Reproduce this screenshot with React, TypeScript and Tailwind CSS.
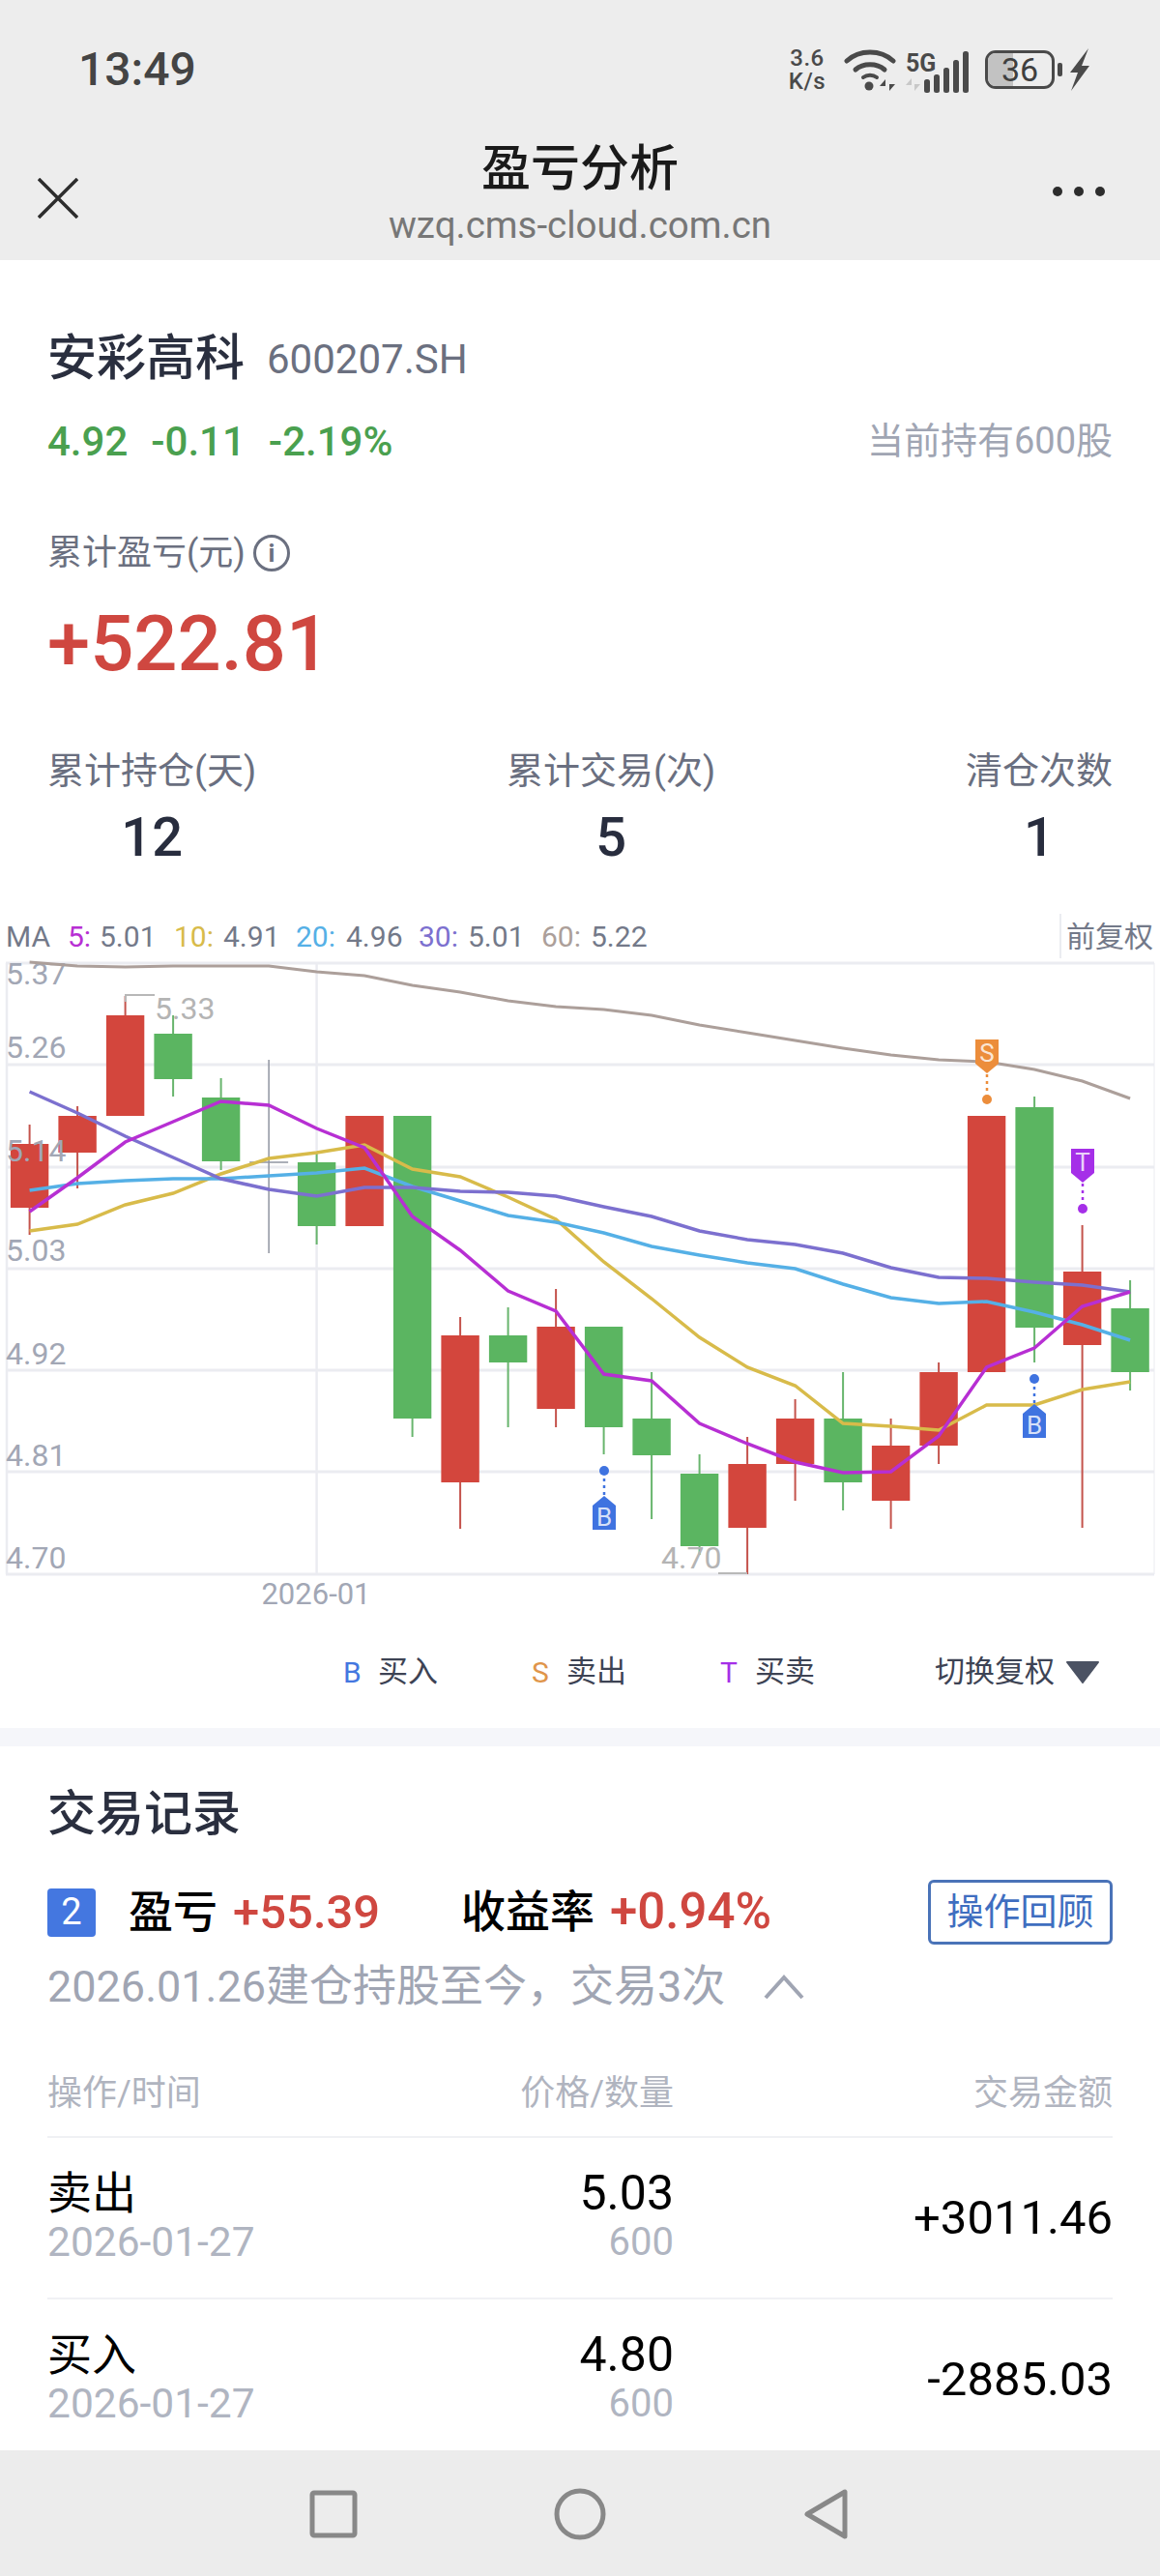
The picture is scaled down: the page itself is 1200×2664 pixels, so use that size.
import React from "react";

const X0 = 30.6;
const STEP = 49.5;
const cx = (i: number) => X0 + STEP * i;

// [up, high, bodyTop, bodyBottom, low]
const candles: [number, number, number, number, number][] = [
  [1, 1163, 1183, 1249, 1277],
  [1, 1144, 1154, 1192, 1229],
  [1, 1030, 1050, 1154, 1154],
  [0, 1050, 1069, 1116, 1134],
  [0, 1115, 1135, 1201, 1210],
  [2, 1096, 1202, 1202, 1296],
  [0, 1192, 1202, 1268, 1287],
  [1, 1154, 1154, 1268, 1268],
  [0, 1154, 1154, 1467, 1486],
  [1, 1362, 1381, 1533, 1581],
  [0, 1352, 1381, 1409, 1476],
  [1, 1333, 1372, 1457, 1476],
  [0, 1372, 1372, 1476, 1504],
  [0, 1419, 1467, 1505, 1571],
  [0, 1504, 1524, 1599, 1608],
  [1, 1486, 1514, 1580, 1628],
  [1, 1447, 1467, 1514, 1552],
  [0, 1419, 1467, 1533, 1562],
  [1, 1467, 1495, 1552, 1581],
  [1, 1409, 1419, 1495, 1514],
  [1, 1154, 1154, 1419, 1419],
  [0, 1134, 1145, 1373, 1409],
  [1, 1267, 1315, 1391, 1580],
  [0, 1324, 1353, 1419, 1438],
];

const ma60 = [995, 999, 1000, 999, 999, 999, 1005, 1009, 1019, 1026, 1035, 1041, 1044, 1050, 1060, 1068, 1076, 1084, 1091, 1096, 1098, 1106, 1118, 1136];
const ma30 = [1129, 1151, 1175, 1197, 1219, 1230, 1237, 1228, 1228, 1232, 1233, 1237, 1248, 1258, 1273, 1282, 1287, 1296, 1311, 1321, 1322, 1326, 1329, 1336];
const ma20 = [1231, 1224, 1221, 1219, 1219, 1216, 1213, 1208, 1227, 1242, 1257, 1264, 1275, 1289, 1298, 1306, 1312, 1328, 1342, 1348, 1346, 1357, 1370, 1386];
const ma10 = [1273, 1266, 1246, 1234, 1214, 1198, 1192, 1184, 1209, 1217, 1238, 1261, 1305, 1343, 1383, 1414, 1433, 1472, 1475, 1479, 1453, 1453, 1437, 1429];
const ma5 = [1253, 1218, 1181, 1160, 1139, 1143, 1167, 1187, 1258, 1293, 1335, 1356, 1421, 1428, 1472, 1493, 1512, 1523, 1522, 1485, 1414, 1394, 1351, 1336];

const toPoints = (ys: number[]) => ys.map((y, i) => `${cx(i)},${y}`).join(" ");

const gridYs = [996, 1101, 1207, 1312, 1417, 1522, 1628];

const axisLabels: [string, number][] = [
  ["5.37", 1018],
  ["5.26", 1094],
  ["5.14", 1201],
  ["5.03", 1304],
  ["4.92", 1411],
  ["4.81", 1516],
  ["4.70", 1622],
];

function Marker({ x, y, color, label, down }: { x: number; y: number; color: string; label: string; down: boolean }) {
  // y is where the flag's tip meets the dotted line
  if (down) {
    return (
      <g>
        <path d={`M${x - 12} ${y - 35}h24v25l-12 10l-12 -10z`} fill={color} />
        <text x={x} y={y - 12} fontSize="26" fill="#fff" fillOpacity="0.8" textAnchor="middle" fontFamily="Roboto">{label}</text>
        <line x1={x} y1={y + 1} x2={x} y2={y + 20} stroke={color} strokeWidth="2.5" strokeDasharray="3 4" />
        <circle cx={x} cy={y + 27} r="5" fill={color} />
      </g>
    );
  }
  return (
    <g>
      <path d={`M${x - 12} ${y + 35}h24v-25l-12 -10l-12 10z`} fill={color} />
      <text x={x} y={y + 31} fontSize="26" fill="#fff" fillOpacity="0.8" textAnchor="middle" fontFamily="Roboto">{label}</text>
      <line x1={x} y1={y - 1} x2={x} y2={y - 18} stroke={color} strokeWidth="2.5" strokeDasharray="3 4" />
      <circle cx={x} cy={y - 26} r="5" fill={color} />
    </g>
  );
}

function KChart() {
  return (
    <svg width="1200" height="684" viewBox="0 986 1200 684" className="block">
      {gridYs.map((y) => (
        <line key={y} x1="6" x2="1194" y1={y} y2={y} stroke="#ebecf1" strokeWidth="3" />
      ))}
      <line x1="7" x2="7" y1="996" y2="1628" stroke="#ebecf1" strokeWidth="2.5" />
      <line x1="327.6" x2="327.6" y1="996" y2="1628" stroke="#ebecf1" strokeWidth="2.5" />
      <line x1="1194" x2="1194" y1="996" y2="1628" stroke="#ebecf1" strokeWidth="1" />

      {candles.map(([up, high, top, bottom, low], i) => {
        const x = cx(i);
        if (up === 2) {
          return (
            <g key={i} stroke="#8f94a0" strokeWidth="1.5">
              <line x1={x} x2={x} y1={high} y2={low} />
              <line x1={x - 20} x2={x + 20} y1={top} y2={top} />
            </g>
          );
        }
        const fill = up ? "#d3463d" : "#5bb561";
        const wick = up ? "#c4534c" : "#68b56d";
        return (
          <g key={i}>
            <line x1={x} x2={x} y1={high} y2={low} stroke={wick} strokeWidth="2" />
            <rect x={x - 19.7} y={top} width="39.4" height={bottom - top} fill={fill} />
          </g>
        );
      })}

      {axisLabels.map(([t, y]) => (
        <text key={t} x="6" y={y} fontSize="32" fill="#a2a7b5" fontFamily="Roboto">{t}</text>
      ))}

      <polyline points={toPoints(ma60)} fill="none" stroke="#ac9f9a" strokeWidth="3" />
      <polyline points={toPoints(ma10)} fill="none" stroke="#d8bb4a" strokeWidth="3.5" />
      <polyline points={toPoints(ma20)} fill="none" stroke="#55b0e6" strokeWidth="3.5" />
      <polyline points={toPoints(ma30)} fill="none" stroke="#7c70cf" strokeWidth="3.5" />
      <polyline points={toPoints(ma5)} fill="none" stroke="#b72fd3" strokeWidth="3.5" />

      <polyline points="130,1036 130,1029 160,1029" fill="none" stroke="#b8b8b8" strokeWidth="2" />
      <text x="160" y="1054" fontSize="32" fill="#b4b4b4" fontFamily="Roboto">5.33</text>
      <line x1="743" x2="773" y1="1627" y2="1627" stroke="#b8b8b8" strokeWidth="2" />
      <text x="684" y="1622" fontSize="32" fill="#b4b4b4" fontFamily="Roboto">4.70</text>
      <text x="327" y="1659" fontSize="31" fill="#a2a7b5" textAnchor="middle" fontFamily="Roboto">2026-01</text>

      <Marker x={1021} y={1110} color="#ec8d3b" label="S" down />
      <Marker x={1120} y={1223} color="#a52fe8" label="T" down />
      <Marker x={625} y={1547} color="#3f73e0" label="B" down={false} />
      <Marker x={1070} y={1452} color="#3f73e0" label="B" down={false} />
    </svg>
  );
}

function StatusIcons() {
  return (
    <div className="flex items-center">
      <div className="flex w-[44px] flex-col items-center text-[24px] font-medium leading-[24px] tracking-[0.5px] text-[#4a4a4a]">
        <span>3.6</span>
        <span>K/s</span>
      </div>
      <svg width="58" height="44" viewBox="0 0 58 44" className="ml-[16px]" fill="none" stroke="#4a4a4a" strokeLinecap="round">
        <path d="M3 13C16 1 38 1 51 13" strokeWidth="5" />
        <path d="M12 22C20 15 34 15 42 22" strokeWidth="5" />
        <path d="M20 30C24 27 30 27 34 30" strokeWidth="4" />
        <circle cx="26" cy="39" r="4.5" fill="#4a4a4a" stroke="none" />
        <path d="M43 44V32l-6 7h6zM47 32v12l6 -7h-6z" fill="#4a4a4a" stroke="none" />
      </svg>
      <svg width="72" height="50" viewBox="0 -6 72 50" className="ml-[6px]">
        <text x="0" y="21" fontSize="25" fontWeight="700" fill="#4a4a4a" fontFamily="Roboto">5G</text>
        <path d="M6 41V28l-6 7h6zM9 28v13l6 -7h-6z" fill="#c8c8c8" />
        <rect x="19" y="29" width="6" height="14" rx="2.5" fill="#4a4a4a" />
        <rect x="29" y="24" width="6" height="19" rx="2.5" fill="#4a4a4a" />
        <rect x="39" y="17" width="6" height="26" rx="2.5" fill="#4a4a4a" />
        <rect x="49" y="9" width="6" height="34" rx="2.5" fill="#4a4a4a" />
        <rect x="59" y="0" width="6" height="43" rx="2.5" fill="#4a4a4a" />
      </svg>
      <div className="relative ml-[10px] flex h-[40px] w-[72px] items-center justify-center overflow-hidden rounded-[11px] border-[3px] border-[#4a4a4a] text-[34px] leading-none text-[#3f3f3f]">
        <div className="absolute inset-y-0 left-0 w-[26px] bg-[#c2c2c2]" />
        <span className="relative">36</span>
      </div>
      <div className="ml-[3px] h-[14px] w-[5px] rounded-[2px] bg-[#4a4a4a]" />
      <svg width="22" height="44" viewBox="0 0 22 44" className="ml-[7px]">
        <path d="M20 0L1 25h8L2 44l19-26h-8z" fill="#4a4a4a" />
      </svg>
    </div>
  );
}

function TradeRow({ op, price, amount }: { op: string; price: string; amount: string }) {
  return (
    <div className="flex h-[167px] items-center justify-between border-b-2 border-[#f0f1f4]">
      <div className="w-[300px]">
        <div className="h-[50px] text-[46px] leading-[50px] text-black">{op}</div>
        <div className="h-[52px] text-[42.5px] leading-[52px] text-[#b0b5c1]">2026-01-27</div>
      </div>
      <div className="w-[348px] text-right">
        <div className="h-[50px] text-[50px] leading-[50px] text-black">{price}</div>
        <div className="h-[52px] text-[40px] leading-[52px] text-[#b0b5c1]">600</div>
      </div>
      <div className="flex-1 text-right text-[49px] text-black">{amount}</div>
    </div>
  );
}

function LegendItem({ letter, label, color }: { letter: string; label: string; color: string }) {
  return (
    <div className="flex items-center">
      <span className={`w-[36px] text-[30px] ${color}`}>{letter}</span>
      <span className="text-[31px] text-[#3d4354]">{label}</span>
    </div>
  );
}

function Stat({ label, value }: { label: string; value: string }) {
  return (
    <div className="text-center">
      <div className="h-[50px] text-[38px] leading-[50px] text-[#6a6f80]">{label}</div>
      <div className="mt-[9px] h-[70px] text-[56px] font-medium leading-[70px] text-[#282d3e]">{value}</div>
    </div>
  );
}

export default function App() {
  return (
    <div className="flex h-[2664px] w-[1200px] flex-col overflow-hidden bg-white font-['Roboto','Noto_Sans_CJK_SC',sans-serif]">
      <header className="h-[269px] flex-none bg-[#ededed]">
        <div className="flex h-[144px] items-center justify-between pl-[81px] pr-[72px]">
          <span className="text-[48px] font-medium text-[#444]">13:49</span>
          <StatusIcons />
        </div>
        <div className="flex items-start justify-between pl-[39px] pr-[57px]">
          <div className="w-[96px]">
            <svg width="42" height="42" viewBox="0 0 42 42" className="mt-[40px]" stroke="#2d2d2d" strokeWidth="3.5" fill="none">
              <path d="M1 1L41 41M41 1L1 41" />
            </svg>
          </div>
          <div className="text-center">
            <div className="h-[62px] text-[51px] font-medium leading-[62px] text-[#1a1a1a]">盈亏分析</div>
            <div className="mt-[4px] h-[46px] text-[38.5px] leading-[46px] text-[#777]">wzq.cms-cloud.com.cn</div>
          </div>
          <div className="mt-[49px] flex w-[78px] justify-end gap-[12px]">
            <span className="h-[10px] w-[10px] rounded-full bg-[#2d2d2d]" />
            <span className="h-[10px] w-[10px] rounded-full bg-[#2d2d2d]" />
            <span className="h-[10px] w-[10px] rounded-full bg-[#2d2d2d]" />
          </div>
        </div>
      </header>

      <main className="min-h-0 flex-1 overflow-hidden">
        <section className="px-[49px] pt-[72px]">
          <div className="flex h-[60px] items-center">
            <span className="text-[51px] font-medium text-[#2a2f3f]">安彩高科</span>
            <span className="ml-[23px] text-[42px] text-[#6b7080]">600207.SH</span>
          </div>
          <div className="mt-[30px] flex h-[50px] items-center justify-between">
            <div className="flex gap-[24px] text-[42px] font-medium text-[#4aa04f]">
              <span>4.92</span>
              <span>-0.11</span>
              <span>-2.19%</span>
            </div>
            <span className="text-[38px] text-[#a0a5b3]">当前持有600股</span>
          </div>
          <div className="mt-[66px] flex h-[50px] items-center text-[36px] text-[#6b7080]">
            <span>累计盈亏(元)</span>
            <span className="ml-[8px] flex h-[38px] w-[38px] items-center justify-center rounded-full border-[3px] border-[#6b7080] text-[26px] font-bold leading-none">i</span>
          </div>
          <div className="mt-[24px] h-[90px] text-[79.5px] font-medium leading-[90px] text-[#cf4740]">+522.81</div>
          <div className="mt-[61px] flex justify-between">
            <Stat label="累计持仓(天)" value="12" />
            <Stat label="累计交易(次)" value="5" />
            <Stat label="清仓次数" value="1" />
          </div>
        </section>

        <section className="mt-[49px]">
          <div className="flex h-[36px] items-center pl-[6px] text-[30px] text-[#737989]">
            <span className="w-[64px]">MA</span>
            <span className="w-[33px] text-[#b72fd3]">5:</span>
            <span className="w-[77px]">5.01</span>
            <span className="w-[51px] text-[#d8bb4a]">10:</span>
            <span className="w-[75px]">4.91</span>
            <span className="w-[52px] text-[#55b0e6]">20:</span>
            <span className="w-[75px]">4.96</span>
            <span className="w-[51px] text-[#7c70cf]">30:</span>
            <span className="w-[76px]">5.01</span>
            <span className="w-[51px] text-[#ac9f9a]">60:</span>
            <span className="w-[485px]">5.22</span>
            <span className="flex h-[46px] items-center border-l-2 border-[#ebecf1] pl-[5px] text-[30px]">前复权</span>
          </div>
          <KChart />
          <div className="mt-[34px] flex h-[50px] items-center pl-[355px]">
            <LegendItem letter="B" label="买入" color="text-[#4477e0]" />
            <div className="ml-[97px]"><LegendItem letter="S" label="卖出" color="text-[#e0954a]" /></div>
            <div className="ml-[97px]"><LegendItem letter="T" label="买卖" color="text-[#a52fe8]" /></div>
            <span className="ml-[124px] text-[31px] text-[#3d4354]">切换复权</span>
            <svg width="36" height="24" viewBox="0 0 36 24" className="ml-[11px]">
              <path d="M2 2H34L18 23z" fill="#4b5263" stroke="#4b5263" strokeWidth="2" strokeLinejoin="round" />
            </svg>
          </div>
        </section>

        <div className="mt-[33px] h-[19px] bg-[#f5f6fa]" />

        <section className="px-[49px]">
          <div className="mt-[40px] h-[60px] text-[50px] font-medium leading-[60px] text-[#2a2f3f]">交易记录</div>
          <div className="mt-[38px] flex h-[67px] items-center justify-between">
            <div className="flex items-center">
              <span className="flex h-[50px] w-[50px] items-center justify-center rounded-[4px] bg-[#4477e0] text-[38px] text-white">2</span>
              <span className="ml-[34px] text-[46px] font-medium text-black">盈亏</span>
              <span className="ml-[16px] w-[236px] text-[49px] font-medium text-[#cf4740]">+55.39</span>
              <span className="text-[46px] font-medium text-black">收益率</span>
              <span className="ml-[16px] text-[51px] font-medium text-[#cf4740]">+0.94%</span>
            </div>
            <span className="flex h-[67px] w-[191px] items-center justify-center rounded-[6px] border-[3px] border-[#4a73b8] text-[38px] text-[#3f6ec0]">操作回顾</span>
          </div>
          <div className="mt-[19px] flex h-[50px] items-center text-[45px] text-[#a0a5b3]">
            <span>2026.01.26建仓持股至今，交易3次</span>
            <svg width="42" height="26" viewBox="0 0 42 26" className="ml-[40px]" fill="none" stroke="#a0a5b3" strokeWidth="4">
              <path d="M2 24L21 3L40 24" />
            </svg>
          </div>

          <div className="mt-[60px] flex h-[71px] items-start justify-between border-b-2 border-[#f0f1f4] text-[36px] leading-[50px] text-[#b0b4bf]">
            <span className="w-[300px]">操作/时间</span>
            <span className="w-[348px] text-right">价格/数量</span>
            <span className="flex-1 text-right">交易金额</span>
          </div>
          <TradeRow op="卖出" price="5.03" amount="+3011.46" />
          <TradeRow op="买入" price="4.80" amount="-2885.03" />
        </section>
      </main>

      <nav className="flex h-[130px] flex-none items-center bg-[#ececec]">
        <svg width="1200" height="130" viewBox="0 2534 1200 130" fill="none" stroke="#888" strokeWidth="5" strokeLinejoin="round">
          <rect x="323" y="2578" width="44" height="44" rx="2" />
          <circle cx="600" cy="2600" r="24" />
          <path d="M874 2577V2623L835 2600Z" />
        </svg>
      </nav>
    </div>
  );
}
